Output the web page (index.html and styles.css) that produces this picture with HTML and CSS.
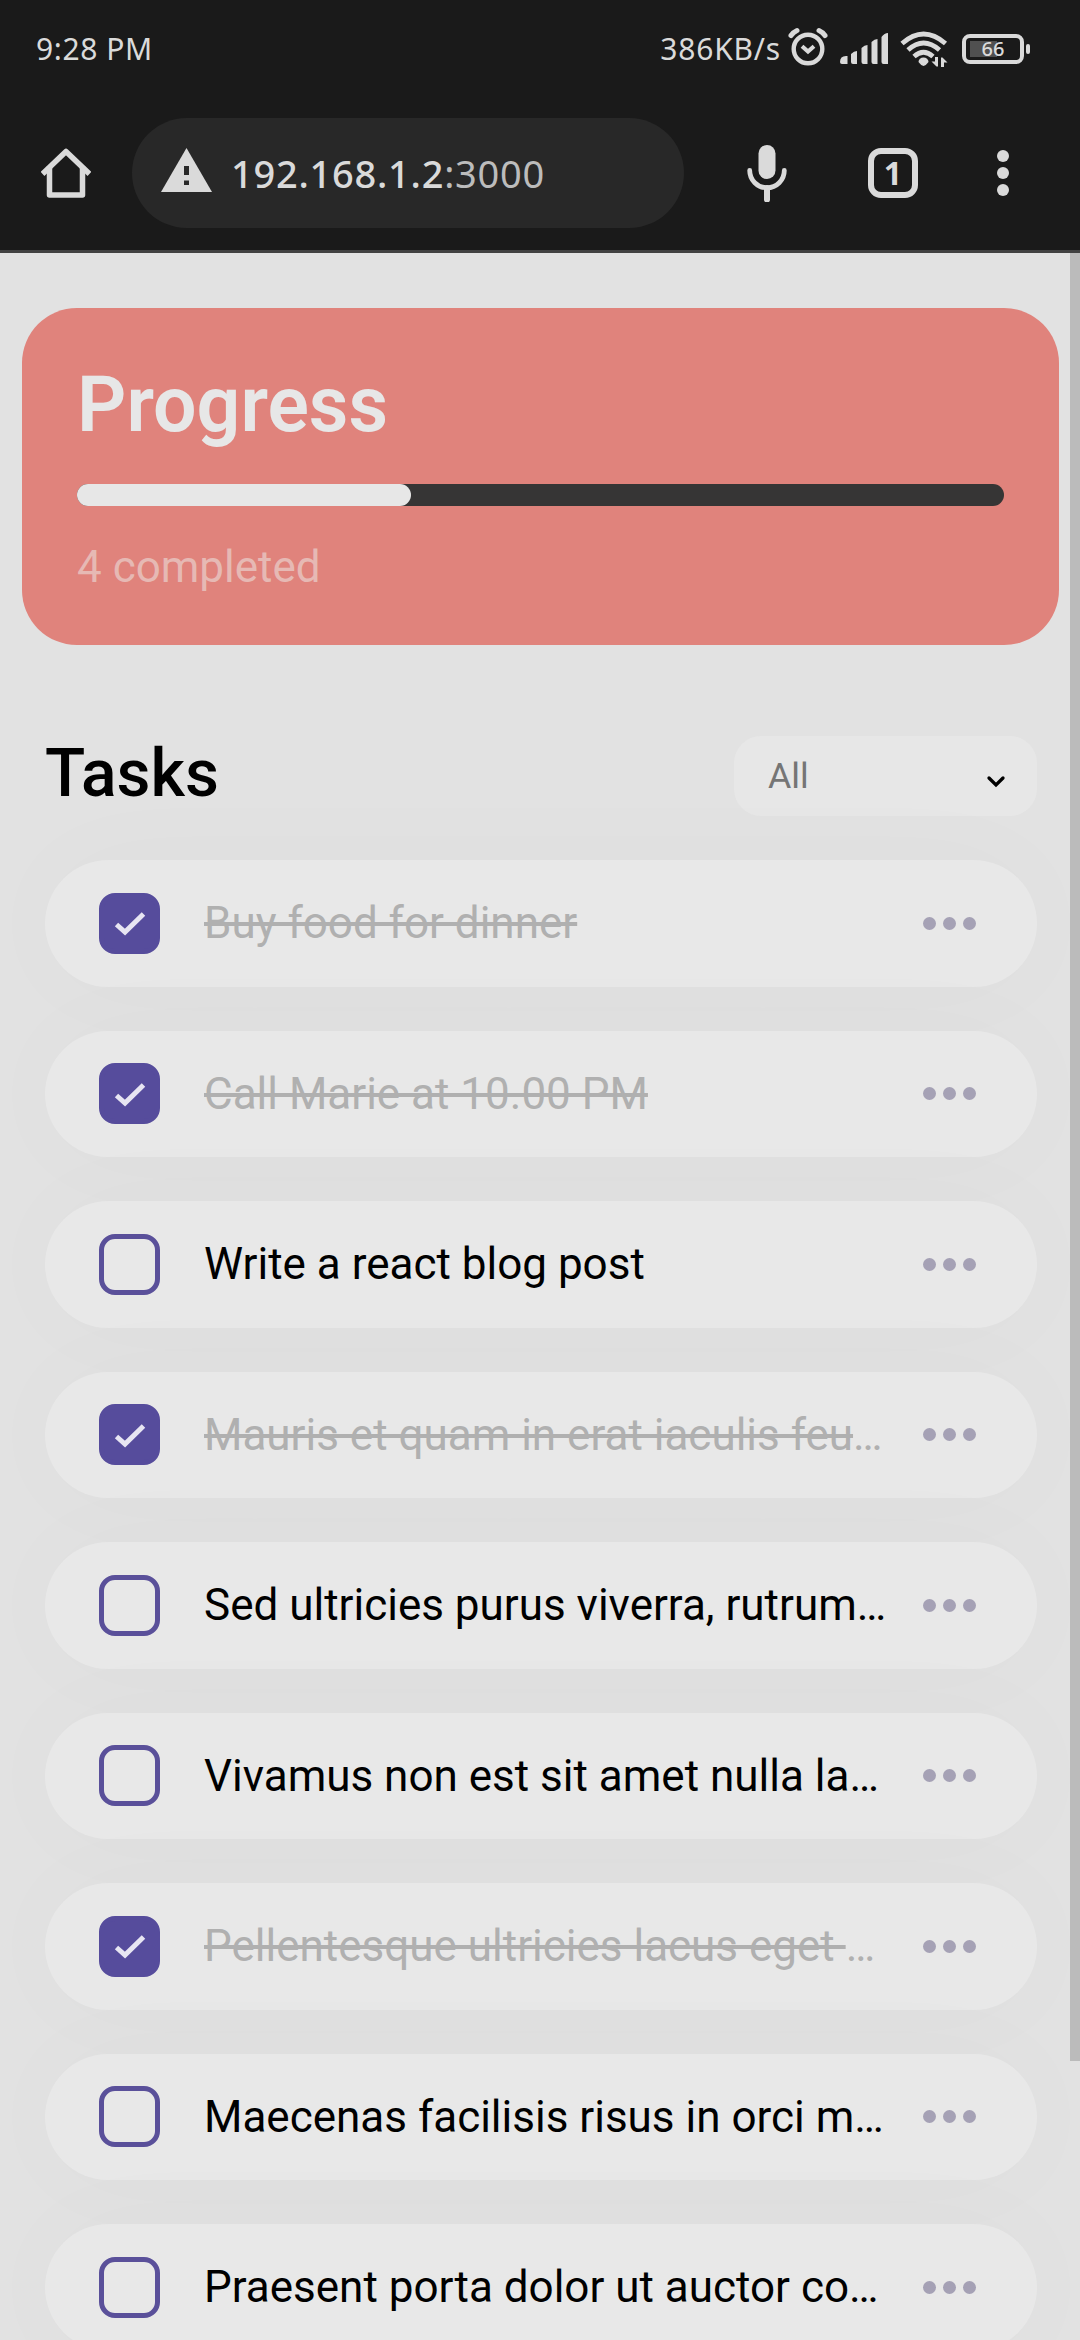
FILE: index.html
```html
<!DOCTYPE html>
<html lang="en">
<head>
<meta charset="utf-8">
<title>Tasks</title>
<link rel="stylesheet" href="styles.css">
</head>
<body>
<header class="chrome">
  <div class="status">
    <span class="time">9:28 PM</span>
    <div class="status-icons">
      <span class="speed">386KB/s</span>
      <svg class="icon-alarm" viewBox="0 0 40 40" width="40" height="40" fill="none" stroke="currentColor" stroke-width="4.4" stroke-linecap="round"><circle cx="20" cy="22" r="14.3"/><path d="M15.500 20.500l4.500 4 4.500-4" stroke-linecap="square" stroke-width="4"/><path d="M3 8.500Q5.500 5 9 3.500M37 8.500Q34.500 5 31 3.500" stroke-width="5"/></svg>
      <svg class="icon-signal" viewBox="0 0 48 32" width="48" height="32" fill="currentColor"><path d="M0 29q0-6 6-6h1.500v8H2q-2 0-2-2zM11 21q3-3 6-3v13h-4q-2 0-2-2zM21.500 15q3-3 6-3v19h-4q-2 0-2-2zM31.500 9q3-3 6-3v25h-4q-2 0-2-2zM41.500 4q3-4 6.500-4v31h-4.500q-2 0-2-2z"/></svg>
      <svg class="icon-wifi" viewBox="0 0 48 37" width="48" height="37"><g fill="none" stroke="currentColor" stroke-width="4.800"><path d="M2 12.500Q23.500-6.500 45.500 12.500"/><path d="M8 19Q23.500 5 39.500 19"/><path d="M14 25.500Q23.500 17 33 25.500"/></g><path d="M18.500 31a5 4.500 0 0 1 10 0q-2 3-5 4-3-1-5-4z" fill="currentColor"/><path d="M38 26v9.500h-1.500l-5-5h3.500V26zM41 36v-9.500h1.500l5 5H44V36z" fill="currentColor"/></svg>
      <div class="battery"><span class="battery-fill"></span><span class="battery-text">66</span></div>
      <span class="battery-tip"></span>
    </div>
  </div>
  <div class="toolbar">
    <svg class="icon-home" viewBox="0 0 50 52" width="50" height="52" fill="none" stroke="currentColor" stroke-width="5.500" stroke-linejoin="round" stroke-linecap="square"><path d="M3.500 25L25 4.500 46.500 25"/><path d="M8.500 22v26h33V22"/></svg>
    <div class="omnibox">
      <svg class="icon-warn" viewBox="0 0 51 44" width="51" height="44"><path d="M25.500 0L51 44H0z" fill="currentColor"/><path d="M23 18h5v9h-5zM23 32.500h5v4.500h-5z" fill="#282828"/></svg>
      <span class="url">192.168.1.2<span class="port">:3000</span></span>
    </div>
    <svg class="icon-mic" viewBox="0 0 40 57" width="40" height="57"><rect x="11.500" y="0" width="17" height="34" rx="8.500" fill="currentColor"/><path d="M2.700 25.500a17.300 17.300 0 0 0 34.600 0" fill="none" stroke="currentColor" stroke-width="4.800" stroke-linecap="round"/><path d="M20 43v11.500" stroke="currentColor" stroke-width="6" stroke-linecap="round"/></svg>
    <div class="tabs">1</div>
    <svg class="icon-more" viewBox="0 0 12 46" width="12" height="46" fill="currentColor"><circle cx="6" cy="6" r="6"/><circle cx="6" cy="23" r="6"/><circle cx="6" cy="40" r="6"/></svg>
  </div>
</header>
<main class="page">
  <div class="content">
    <section class="progress">
      <h1 class="progress-title">Progress</h1>
      <div class="track"><div class="fill" style="width:36%"></div></div>
      <p class="completed">4 completed</p>
    </section>
    <section class="tasks">
      <div class="tasks-head">
        <h2 class="tasks-title">Tasks</h2>
        <div class="select"><span>All</span><svg viewBox="0 0 20 13" width="20" height="13" fill="none" stroke="#000" stroke-width="3.300" stroke-linecap="round"><path d="M3 3l7 7 7-7"/></svg></div>
      </div>
      <ul class="list">
        <li class="task done"><span class="box"><svg class="tick" viewBox="0 0 32 24" width="32" height="24"><path d="M2.500 12.500l8.500 7.500L29.500 2" fill="none" stroke="#e7e5f2" stroke-width="5"/></svg></span><span class="label"><span>Buy food for dinner</span></span><span class="dots"><i></i><i></i><i></i></span></li>
        <li class="task done"><span class="box"><svg class="tick" viewBox="0 0 32 24" width="32" height="24"><path d="M2.500 12.500l8.500 7.500L29.500 2" fill="none" stroke="#e7e5f2" stroke-width="5"/></svg></span><span class="label"><span>Call Marie at 10.00 PM</span></span><span class="dots"><i></i><i></i><i></i></span></li>
        <li class="task"><span class="box"></span><span class="label"><span>Write a react blog post</span></span><span class="dots"><i></i><i></i><i></i></span></li>
        <li class="task done"><span class="box"><svg class="tick" viewBox="0 0 32 24" width="32" height="24"><path d="M2.500 12.500l8.500 7.500L29.500 2" fill="none" stroke="#e7e5f2" stroke-width="5"/></svg></span><span class="label"><span>Mauris et quam in erat iaculis feu</span>…</span><span class="dots"><i></i><i></i><i></i></span></li>
        <li class="task"><span class="box"></span><span class="label"><span>Sed ultricies purus viverra, rutrum</span>…</span><span class="dots"><i></i><i></i><i></i></span></li>
        <li class="task"><span class="box"></span><span class="label"><span>Vivamus non est sit amet nulla la</span>…</span><span class="dots"><i></i><i></i><i></i></span></li>
        <li class="task done"><span class="box"><svg class="tick" viewBox="0 0 32 24" width="32" height="24"><path d="M2.500 12.500l8.500 7.500L29.500 2" fill="none" stroke="#e7e5f2" stroke-width="5"/></svg></span><span class="label"><span>Pellentesque ultricies lacus eget </span>…</span><span class="dots"><i></i><i></i><i></i></span></li>
        <li class="task"><span class="box"></span><span class="label"><span>Maecenas facilisis risus in orci m</span>…</span><span class="dots"><i></i><i></i><i></i></span></li>
        <li class="task"><span class="box"></span><span class="label"><span>Praesent porta dolor ut auctor co</span>…</span><span class="dots"><i></i><i></i><i></i></span></li>
      </ul>
    </section>
  </div>
  <div class="scrollbar"></div>
</main>
</body>
</html>
```
FILE: styles.css
```css
* { box-sizing: border-box; margin: 0; padding: 0; }
body {
  width: 1080px;
  height: 2340px;
  overflow: hidden;
  display: flex;
  flex-direction: column;
  background: #e2e2e2;
  font-family: Roboto, sans-serif;
}
svg { display: block; flex: none; }

/* Browser and system bars */
.chrome {
  flex: none;
  height: 253px;
  background: #1a1a1a;
  border-bottom: 3px solid #424242;
  color: #dadada;
  font-family: "Noto Sans", sans-serif;
}
.status {
  height: 98px;
  padding: 0 50px 0 36px;
  display: flex;
  justify-content: space-between;
  align-items: center;
  font-size: 30px;
  line-height: 40px;
}
.time { letter-spacing: .6px; }
.status-icons { display: flex; align-items: center; }
.speed { letter-spacing: .8px; margin-right: 7px; }
.icon-alarm { margin-right: 12px; margin-top: -4px; }
.icon-signal { margin-right: 12px; }
.icon-wifi { margin-right: 14px; }
.battery {
  width: 62px;
  height: 30px;
  border: 4px solid currentColor;
  border-radius: 8px;
  padding: 3px 4px;
  display: grid;
}
.battery-fill {
  grid-area: 1 / 1;
  width: 27px;
  height: 16px;
  background: #505050;
}
.battery-text {
  grid-area: 1 / 1;
  justify-self: center;
  font-size: 20px;
  font-weight: 500;
  line-height: 16px;
}
.battery-tip {
  width: 4px;
  height: 10px;
  margin-left: 2px;
  border-radius: 2px;
  background: currentColor;
}
.toolbar {
  height: 110px;
  margin-top: 20px;
  padding: 0 71px 0 41px;
  display: flex;
  align-items: center;
}
.omnibox {
  width: 552px;
  height: 110px;
  margin-left: 41px;
  padding-left: 29px;
  border-radius: 55px;
  background: #282828;
  display: flex;
  align-items: center;
}
.icon-warn { margin-top: -6px; }
.url { margin-left: 19px; font-size: 38px; font-weight: 500; letter-spacing: .75px; }
.port { color: #bcbcbc; font-weight: 400; }
.icon-mic { margin-left: 63px; }
.tabs {
  width: 50px;
  height: 50px;
  margin-left: 81px;
  border: 6px solid currentColor;
  border-radius: 13px;
  font-size: 32px;
  font-weight: 700;
  line-height: 38px;
  text-align: center;
}
.icon-more { margin-left: 79px; }

/* Page */
.page { flex: 1; min-height: 0; display: flex; }
.content { width: 1070px; padding: 55px 11px 0 22px; }
.scrollbar { width: 10px; height: 1808px; background: #bbb; }

.progress {
  height: 337px;
  padding: 53px 55px 55px;
  border-radius: 55px;
  background: #e0837c;
}
.progress-title {
  color: #e7e7e7;
  font-size: 77px;
  font-weight: 600;
  line-height: 88px;
}
.track {
  height: 22px;
  margin-top: 35px;
  border-radius: 11px;
  background: #363535;
  box-shadow: 0 0 110px rgba(0, 0, 0, .02);
}
.fill { height: 22px; border-radius: 11px; background: #e7e7e7; }
.completed {
  margin-top: 35px;
  color: #e6b9b4;
  font-size: 44px;
  line-height: 52px;
}

.tasks { padding: 91px 22px 0 23px; }
.tasks-head {
  height: 80px;
  display: flex;
  justify-content: space-between;
  align-items: center;
}
.tasks-title {
  margin-top: -4px;
  color: #000;
  font-size: 66px;
  font-weight: 500;
  line-height: 78px;
}
.select {
  width: 303px;
  height: 80px;
  padding: 0 31px 0 34px;
  border-radius: 27px;
  background: #e7e7e7;
  display: flex;
  justify-content: space-between;
  align-items: center;
  color: #757575;
  font-size: 35.75px;
}
.select svg { margin-top: 10px; }
.list {
  list-style: none;
  margin-top: 44px;
  display: flex;
  flex-direction: column;
  gap: 44px;
}
.task {
  height: 126.5px;
  padding: 0 61px 0 54px;
  border-radius: 64px;
  background: #e8e8e8;
  box-shadow: 0 0 110px rgba(0, 0, 0, .022);
  display: flex;
  align-items: center;
}
.box {
  flex: none;
  width: 61px;
  height: 61px;
  border: 5px solid #5a509a;
  border-radius: 16px;
  display: flex;
  align-items: center;
  justify-content: center;
}
.done .box { background: #564c9c; border-color: #564c9c; }
.tick { margin-top: 2px; }
.label {
  flex: 1;
  margin-left: 44px;
  color: #000;
  font-size: 44px;
  line-height: 52px;
  white-space: pre;
}
.done .label { color: #b0b0b0; }
.done .label span { text-decoration: line-through; }
.dots { display: flex; gap: 7px; }
.dots i { width: 13px; height: 13px; border-radius: 50%; background: #a5a1b5; }
```
